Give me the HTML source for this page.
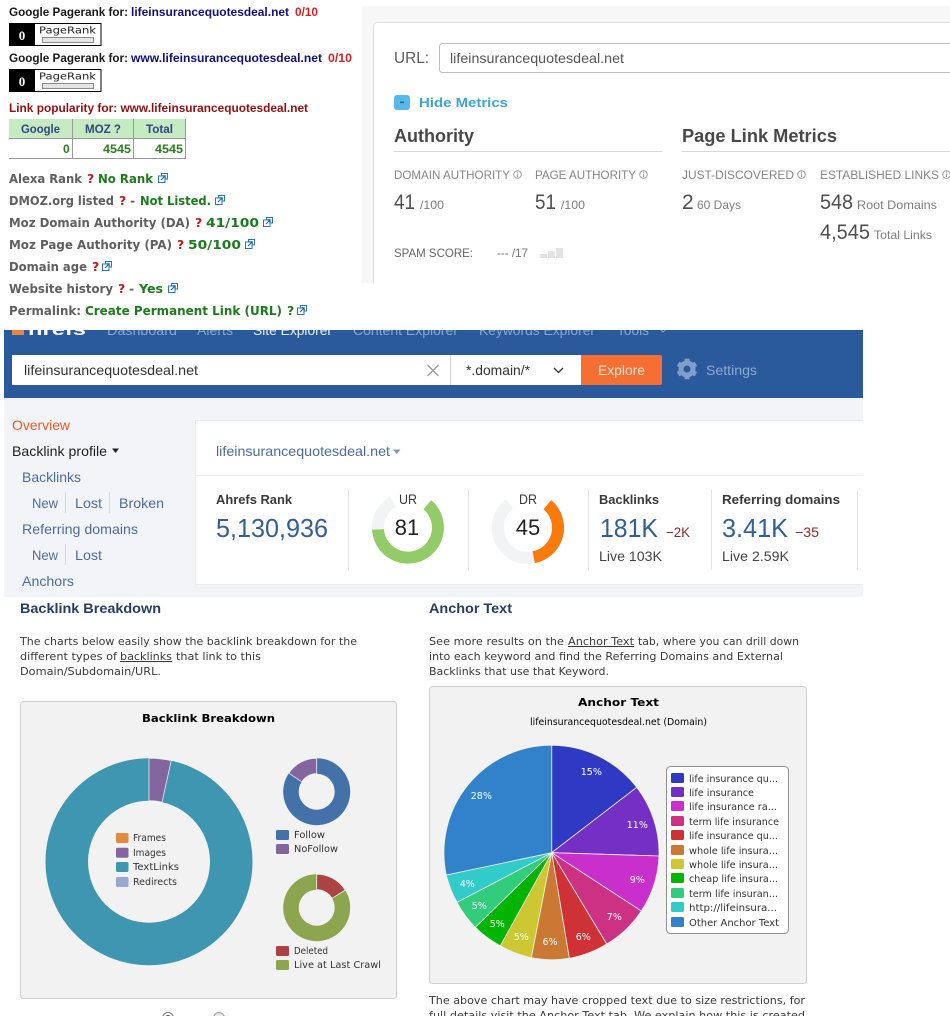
<!DOCTYPE html>
<html lang="en"><head><meta charset="utf-8"><title>Metrics</title>
<style>
html,body{margin:0;padding:0;background:#fff;width:950px;height:1016px;overflow:hidden}
svg{display:block}
text{font-family:"Liberation Sans",Arial,sans-serif;white-space:pre}
.b{font-weight:700}
.v{font-family:"DejaVu Sans",Verdana,sans-serif}
.r{font-family:"DejaVu Sans",Verdana,sans-serif;font-weight:700;font-size:12.5px}
.g{fill:#5f5f5f}.gr{fill:#1d7a1d}.q{fill:#b02020}
.p{font-family:"DejaVu Sans",Verdana,sans-serif;font-size:10.5px;fill:#3a3a3a}
.l{font-family:"DejaVu Sans",Verdana,sans-serif;font-size:9.5px;fill:#333}
.n{font-size:14px;fill:#4c6c9f}
.pl{font-family:"DejaVu Sans",Verdana,sans-serif;font-size:9.5px;fill:#fff;text-anchor:middle}
</style></head><body>
<svg xmlns="http://www.w3.org/2000/svg" width="950" height="1016" viewBox="0 0 950 1016">
<defs>
<clipPath id="navclip"><rect x="0" y="330" width="950" height="20"/></clipPath>
<symbol id="ext" viewBox="0 0 10 10" overflow="visible">
<rect x="3.5" y=".5" width="6" height="5.5" fill="#fff" stroke="#2b74b5" stroke-width="1"/>
<rect x=".5" y="3" width="6.5" height="6.5" fill="#fff" stroke="#2b74b5" stroke-width="1"/>
<path d="M3 7L7 3M4.5 2.8H7.2V5.5" fill="none" stroke="#1c5f9e" stroke-width="1"/>
</symbol>
<symbol id="info" viewBox="0 0 9 9" overflow="visible">
<circle cx="4.5" cy="4.5" r="3.8" fill="none" stroke="#999" stroke-width="1"/>
<path d="M4.5 3.6V7M4.5 1.8V2.8" stroke="#999" stroke-width="1"/>
</symbol>
<symbol id="pr" viewBox="0 0 92 23" overflow="visible">
<rect x=".5" y=".5" width="91.5" height="22" fill="#fff" stroke="#000"/>
<rect x="0" y="0" width="26" height="23" fill="#000"/>
<text x="13" y="17" text-anchor="middle" fill="#fff" style="font-family:'Liberation Serif',serif;font-weight:700;font-size:13px">0</text>
<text x="30" y="10.5" textLength="57" lengthAdjust="spacingAndGlyphs" fill="#222" style="font-family:'DejaVu Sans',sans-serif;font-size:10px">PageRank</text>
<rect x="33.5" y="14.5" width="51" height="5" fill="#e4e4e4" stroke="#8a8a8a"/>
</symbol>
</defs>

<!-- top left -->
<g style="font-size:12px" class="b">
<text x="9" y="16" fill="#1a1a1a" textLength="119" lengthAdjust="spacingAndGlyphs">Google Pagerank for:</text>
<text x="131" y="16" fill="#10107a" textLength="158" lengthAdjust="spacingAndGlyphs">lifeinsurancequotesdeal.net</text>
<text x="295" y="16" fill="#d02424" textLength="23" lengthAdjust="spacingAndGlyphs">0/10</text>
<text x="9" y="62" fill="#1a1a1a" textLength="119" lengthAdjust="spacingAndGlyphs">Google Pagerank for:</text>
<text x="131" y="62" fill="#10107a" textLength="191" lengthAdjust="spacingAndGlyphs">www.lifeinsurancequotesdeal.net</text>
<text x="328" y="62" fill="#d02424" textLength="24" lengthAdjust="spacingAndGlyphs">0/10</text>
<text x="9" y="112" fill="#8f1010" textLength="299" lengthAdjust="spacingAndGlyphs">Link popularity for: www.lifeinsurancequotesdeal.net</text>
</g>
<use href="#pr" x="9" y="23" width="92" height="23"/>
<use href="#pr" x="9" y="69" width="92" height="23"/>

<!-- table -->
<rect x="9" y="119" width="177" height="19" fill="#c6eac2"/>
<path d="M9 158.5H186M9 138.5H186M72.5 119V158M133.5 119V158M185.5 119V158" stroke="#9a9a9a" fill="none"/>
<g class="b" style="font-size:12px" fill="#34447f">
<text x="21" y="133" textLength="39" lengthAdjust="spacingAndGlyphs">Google</text>
<text x="85" y="133" textLength="36" lengthAdjust="spacingAndGlyphs">MOZ ?</text>
<text x="146" y="133" textLength="27" lengthAdjust="spacingAndGlyphs">Total</text>
</g>
<g class="b" style="font-size:12px" fill="#2c7d1c">
<text x="63" y="153">0</text>
<text x="103" y="153" textLength="28" lengthAdjust="spacingAndGlyphs">4545</text>
<text x="155" y="153" textLength="28" lengthAdjust="spacingAndGlyphs">4545</text>
</g>

<!-- rows -->
<text class="r g" x="9" y="183" textLength="73" lengthAdjust="spacingAndGlyphs">Alexa Rank</text>
<text class="r q" x="87" y="183">?</text>
<text class="r gr" x="98" y="183" textLength="55" lengthAdjust="spacingAndGlyphs">No Rank</text>
<use href="#ext" x="158" y="173" width="10" height="10"/>

<text class="r g" x="9" y="205" textLength="105" lengthAdjust="spacingAndGlyphs">DMOZ.org listed</text>
<text class="r q" x="119" y="205">?</text>
<text class="r g" x="130" y="205">-</text>
<text class="r gr" x="140" y="205" textLength="71" lengthAdjust="spacingAndGlyphs">Not Listed.</text>
<use href="#ext" x="215" y="195" width="10" height="10"/>

<text class="r g" x="9" y="227" textLength="181" lengthAdjust="spacingAndGlyphs">Moz Domain Authority (DA)</text>
<text class="r q" x="195" y="227">?</text>
<text class="r gr" x="206" y="227" textLength="53" lengthAdjust="spacingAndGlyphs">41/100</text>
<use href="#ext" x="263" y="217" width="10" height="10"/>

<text class="r g" x="9" y="249" textLength="163" lengthAdjust="spacingAndGlyphs">Moz Page Authority (PA)</text>
<text class="r q" x="177" y="249">?</text>
<text class="r gr" x="188" y="249" textLength="53" lengthAdjust="spacingAndGlyphs">50/100</text>
<use href="#ext" x="245" y="239" width="10" height="10"/>

<text class="r g" x="9" y="271" textLength="78" lengthAdjust="spacingAndGlyphs">Domain age</text>
<text class="r q" x="92" y="271">?</text>
<use href="#ext" x="102" y="261" width="10" height="10"/>

<text class="r g" x="9" y="293" textLength="104" lengthAdjust="spacingAndGlyphs">Website history</text>
<text class="r q" x="118" y="293">?</text>
<text class="r g" x="129" y="293">-</text>
<text class="r gr" x="139" y="293" textLength="24" lengthAdjust="spacingAndGlyphs">Yes</text>
<use href="#ext" x="168" y="283" width="10" height="10"/>

<text class="r g" x="9" y="315" textLength="72" lengthAdjust="spacingAndGlyphs">Permalink:</text>
<text class="r gr" x="85" y="315" textLength="197" lengthAdjust="spacingAndGlyphs">Create Permanent Link (URL)</text>
<text class="r gr" x="287" y="315">?</text>
<use href="#ext" x="297" y="305" width="10" height="10"/>

<!-- Moz panel -->
<rect x="362" y="6" width="588" height="277" fill="#f7f7f7"/>
<path d="M373.5 283V26.5a4 4 0 0 1 4-4H950V283Z" fill="#fff"/>
<path d="M373.5 283V26.5a4 4 0 0 1 4-4H950" fill="none" stroke="#dedede"/>
<text x="394" y="63" fill="#5a5a5a" textLength="35" lengthAdjust="spacingAndGlyphs" style="font-size:16px">URL:</text>
<path d="M950 43.5H442.5a3 3 0 0 0-3 3v23a3 3 0 0 0 3 3H950" fill="#fff" stroke="#bdbdbd"/>
<text x="450" y="63" fill="#555" textLength="174" lengthAdjust="spacingAndGlyphs" style="font-size:14px">lifeinsurancequotesdeal.net</text>
<rect x="394" y="95" width="16" height="15" rx="3" fill="#56b9ec"/>
<rect x="400" y="101.5" width="4" height="1.6" fill="#1f6d96"/>
<text class="b" x="419" y="107" fill="#3fa5cc" textLength="89" lengthAdjust="spacingAndGlyphs" style="font-size:13px">Hide Metrics</text>
<text class="b" x="394" y="142" fill="#484848" textLength="80" lengthAdjust="spacingAndGlyphs" style="font-size:18px">Authority</text>
<text class="b" x="682" y="142" fill="#484848" textLength="155" lengthAdjust="spacingAndGlyphs" style="font-size:18px">Page Link Metrics</text>
<path d="M394 151.5H662M682 151.5H950" stroke="#d8d8d8"/>
<g fill="#858585" style="font-size:12px">
<text x="394" y="179" textLength="116" lengthAdjust="spacingAndGlyphs">DOMAIN AUTHORITY</text>
<text x="535" y="179" textLength="101" lengthAdjust="spacingAndGlyphs">PAGE AUTHORITY</text>
<text x="682" y="179" textLength="112" lengthAdjust="spacingAndGlyphs">JUST-DISCOVERED</text>
<text x="820" y="179" textLength="119" lengthAdjust="spacingAndGlyphs">ESTABLISHED LINKS</text>
</g>
<use href="#info" x="513" y="170" width="9" height="9"/>
<use href="#info" x="639" y="170" width="9" height="9"/>
<use href="#info" x="797" y="170" width="9" height="9"/>
<use href="#info" x="942" y="170" width="9" height="9"/>
<g fill="#4f4f4f" style="font-size:21px">
<text x="394" y="209" textLength="21" lengthAdjust="spacingAndGlyphs">41</text>
<text x="535" y="209" textLength="21" lengthAdjust="spacingAndGlyphs">51</text>
<text x="682" y="209">2</text>
<text x="820" y="209" textLength="33" lengthAdjust="spacingAndGlyphs">548</text>
<text x="820" y="239" textLength="50" lengthAdjust="spacingAndGlyphs">4,545</text>
</g>
<g fill="#7c7c7c" style="font-size:12px">
<text x="420" y="209" textLength="24" lengthAdjust="spacingAndGlyphs">/100</text>
<text x="561" y="209" textLength="24" lengthAdjust="spacingAndGlyphs">/100</text>
<text x="697" y="209" textLength="44" lengthAdjust="spacingAndGlyphs">60 Days</text>
<text x="857" y="209" textLength="80" lengthAdjust="spacingAndGlyphs">Root Domains</text>
<text x="874" y="239" textLength="58" lengthAdjust="spacingAndGlyphs">Total Links</text>
</g>
<text x="394" y="257" fill="#666" textLength="79" lengthAdjust="spacingAndGlyphs" style="font-size:12px">SPAM SCORE:</text>
<text x="497" y="257" fill="#777" textLength="31" lengthAdjust="spacingAndGlyphs" style="font-size:12px">--- /17</text>
<rect x="540" y="254" width="7" height="4" fill="#e3e3e3"/>
<rect x="548" y="251" width="7" height="7" fill="#e3e3e3"/>
<rect x="556" y="248" width="7" height="10" fill="#e3e3e3"/>

<!-- Ahrefs -->
<rect x="4" y="398" width="859" height="199" fill="#f3f4f7"/>
<rect x="4" y="330" width="859" height="68" fill="#2b5a9c"/>
<g clip-path="url(#navclip)">
<rect x="12" y="322" width="12" height="13" fill="#e8873e"/>
<text class="b" x="28" y="335" fill="#fff" textLength="58" lengthAdjust="spacingAndGlyphs" style="font-size:17px">hrefs</text>
<g fill="#8aa5cf" style="font-size:14px">
<text x="107" y="335" textLength="70" lengthAdjust="spacingAndGlyphs">Dashboard</text>
<text x="197" y="335" textLength="36" lengthAdjust="spacingAndGlyphs">Alerts</text>
<text x="253" y="335" textLength="79" lengthAdjust="spacingAndGlyphs" fill="#e8eef7">Site Explorer</text>
<text x="353" y="335" textLength="105" lengthAdjust="spacingAndGlyphs">Content Explorer</text>
<text x="479" y="335" textLength="116" lengthAdjust="spacingAndGlyphs">Keywords Explorer</text>
<text x="617" y="335" textLength="32" lengthAdjust="spacingAndGlyphs">Tools</text>
</g>
<path d="M660 329l3 3 3-3" fill="none" stroke="#8aa5cf"/>
</g>
<rect x="12" y="355" width="569" height="30" fill="#fff"/>
<path d="M581 355h79a2 2 0 0 1 2 2v26a2 2 0 0 1-2 2h-79Z" fill="#f56f33"/>
<text x="24" y="375" fill="#333" textLength="174" lengthAdjust="spacingAndGlyphs" style="font-size:14px">lifeinsurancequotesdeal.net</text>
<path d="M427.5 365l11 11M438.5 365l-11 11" stroke="#9a9a9a" stroke-width="1.3"/>
<path d="M450.5 355V385" stroke="#d4d4d4"/>
<text x="466" y="375" fill="#333" textLength="64" lengthAdjust="spacingAndGlyphs" style="font-size:14px">*.domain/*</text>
<path d="M554 368l4.500 4.500 4.500-4.500" fill="none" stroke="#333" stroke-width="1.3"/>
<text x="598" y="375" fill="#fbe3d6" textLength="47" lengthAdjust="spacingAndGlyphs" style="font-size:14px">Explore</text>
<g transform="translate(687 369)" fill="#7f9fcd">
<circle r="6" fill="none" stroke="#7f9fcd" stroke-width="5"/>
<rect x="-2.500" y="-10.300" width="5" height="4"/>
<rect x="-2.500" y="-10.300" width="5" height="4" transform="rotate(60)"/>
<rect x="-2.500" y="-10.300" width="5" height="4" transform="rotate(120)"/>
<rect x="-2.500" y="-10.300" width="5" height="4" transform="rotate(180)"/>
<rect x="-2.500" y="-10.300" width="5" height="4" transform="rotate(240)"/>
<rect x="-2.500" y="-10.300" width="5" height="4" transform="rotate(300)"/>
</g>
<text x="706" y="375" fill="#8ea8cf" textLength="51" lengthAdjust="spacingAndGlyphs" style="font-size:14px">Settings</text>

<text x="12" y="430" fill="#e8592c" textLength="58" lengthAdjust="spacingAndGlyphs" style="font-size:14px">Overview</text>
<text x="12" y="456" fill="#222" textLength="95" lengthAdjust="spacingAndGlyphs" style="font-size:14px">Backlink profile</text>
<path d="M112 448.500h7l-3.500 4.500Z" fill="#222"/>
<text class="n" x="22" y="482" textLength="59" lengthAdjust="spacingAndGlyphs">Backlinks</text>
<text class="n" x="32" y="508" textLength="26" lengthAdjust="spacingAndGlyphs">New</text>
<text class="n" x="75" y="508" textLength="27" lengthAdjust="spacingAndGlyphs">Lost</text>
<text class="n" x="119" y="508" textLength="45" lengthAdjust="spacingAndGlyphs">Broken</text>
<text class="n" x="22" y="534" textLength="116" lengthAdjust="spacingAndGlyphs">Referring domains</text>
<text class="n" x="32" y="560" textLength="26" lengthAdjust="spacingAndGlyphs">New</text>
<text class="n" x="75" y="560" textLength="27" lengthAdjust="spacingAndGlyphs">Lost</text>
<text class="n" x="22" y="586" textLength="52" lengthAdjust="spacingAndGlyphs">Anchors</text>
<path d="M65.500 492V513M109.500 492V513M65.500 544V565" stroke="#d3d6de"/>

<path d="M863 420.500H195.500V584.500H863" fill="#fff" stroke="#e9eaec"/>
<path d="M196 475.500H863" stroke="#eceded"/>
<text x="216" y="456" fill="#4c6c9f" textLength="174" lengthAdjust="spacingAndGlyphs" style="font-size:14px">lifeinsurancequotesdeal.net</text>
<path d="M393 449.500h7.500l-3.750 4.500Z" fill="#7d94ba"/>
<path d="M348.500 490V570M468.500 490V570M588.500 490V570M711.500 490V570M857.500 490V570" stroke="#e2e3e5"/>
<g class="b" fill="#3a3a3a" style="font-size:13px">
<text x="216" y="504" textLength="76" lengthAdjust="spacingAndGlyphs">Ahrefs Rank</text>
<text x="399" y="504" textLength="18" lengthAdjust="spacingAndGlyphs" style="font-weight:400;font-size:14px">UR</text>
<text x="519" y="504" textLength="18" lengthAdjust="spacingAndGlyphs" style="font-weight:400;font-size:14px">DR</text>
<text x="599" y="504" textLength="60" lengthAdjust="spacingAndGlyphs">Backlinks</text>
<text x="722" y="504" textLength="118" lengthAdjust="spacingAndGlyphs">Referring domains</text>
</g>
<g fill="#345e97" style="font-size:26px">
<text x="216" y="537" textLength="112" lengthAdjust="spacingAndGlyphs">5,130,936</text>
<text x="600" y="537" textLength="58" lengthAdjust="spacingAndGlyphs">181K</text>
<text x="722" y="537" textLength="66" lengthAdjust="spacingAndGlyphs">3.41K</text>
</g>
<path d="M427.300 504.700A30 30 0 1 1 378 529.300" fill="none" stroke="#93cb69" stroke-width="12"/>
<path d="M378 529.300A30 30 0 0 1 393 501.700" fill="none" stroke="#f1f3f5" stroke-width="12"/>
<path d="M533.700 557.200A30 30 0 0 1 509.500 504" fill="none" stroke="#f1f3f5" stroke-width="12"/>
<path d="M547.300 504.700A30 30 0 0 1 533.700 557.200" fill="none" stroke="#fb7a0d" stroke-width="12"/>
<text x="407" y="535" text-anchor="middle" fill="#222" style="font-size:22px">81</text>
<text x="528" y="535" text-anchor="middle" fill="#222" style="font-size:22px">45</text>
<g fill="#8d2a2a" style="font-size:14px">
<text x="666" y="537" textLength="24" lengthAdjust="spacingAndGlyphs">−2K</text>
<text x="795" y="537" textLength="24" lengthAdjust="spacingAndGlyphs">−35</text>
</g>
<g fill="#444" style="font-size:14px">
<text x="599" y="561" textLength="63" lengthAdjust="spacingAndGlyphs">Live 103K</text>
<text x="722" y="561" textLength="67" lengthAdjust="spacingAndGlyphs">Live 2.59K</text>
</g>

<!-- lower left -->
<text class="b" x="20" y="613" fill="#24405e" textLength="141" lengthAdjust="spacingAndGlyphs" style="font-size:14px">Backlink Breakdown</text>
<text class="p" x="20" y="645" textLength="337" lengthAdjust="spacingAndGlyphs">The charts below easily show the backlink breakdown for the</text>
<text class="p" x="20" y="660" textLength="97" lengthAdjust="spacingAndGlyphs">different types of</text>
<text class="p" x="120" y="660" textLength="52" lengthAdjust="spacingAndGlyphs" text-decoration="underline">backlinks</text>
<text class="p" x="176" y="660" textLength="85" lengthAdjust="spacingAndGlyphs">that link to this</text>
<text class="p" x="20" y="675" textLength="141" lengthAdjust="spacingAndGlyphs">Domain/Subdomain/URL.</text>

<rect x="20.500" y="701.500" width="376" height="297" rx="3" fill="#f2f2f2" stroke="#cfcfcf"/>
<text class="v b" x="142" y="722" fill="#000" textLength="133" lengthAdjust="spacingAndGlyphs" style="font-size:11px">Backlink Breakdown</text>
<circle cx="149" cy="861.700" r="103.500" fill="#3f96b0"/>
<path d="M149 758.200A103.500 103.500 0 0 1 171.200 760.600L162.100 802.100A61 61 0 0 0 149 800.700Z" fill="#84669f" stroke="#e6eef2" stroke-width=".8"/>
<circle cx="149" cy="861.700" r="61" fill="#f2f2f2"/>
<circle cx="316.700" cy="791.700" r="33.500" fill="#4472a8"/>
<path d="M316.700 758.200A33.500 33.500 0 0 0 288.800 773.200L301.700 781.800A18 18 0 0 1 316.700 773.700Z" fill="#84669f" stroke="#eef" stroke-width=".8"/>
<circle cx="316.700" cy="791.700" r="18" fill="#f2f2f2"/>
<circle cx="316.700" cy="907.700" r="33.500" fill="#8ba64f"/>
<path d="M316.700 874.200A33.500 33.500 0 0 1 345.200 890.100L332 898.300A18 18 0 0 0 316.700 889.700Z" fill="#ab4343" stroke="#f4f4ee" stroke-width=".8"/>
<circle cx="316.700" cy="907.700" r="18" fill="#f2f2f2"/>
<rect x="116" y="833" width="12.500" height="10" rx="1.500" fill="#e08b3f"/>
<rect x="116" y="847.700" width="12.500" height="10" rx="1.500" fill="#84669f"/>
<rect x="116" y="862" width="12.500" height="10" rx="1.500" fill="#3f96b0"/>
<rect x="116" y="877" width="12.500" height="10" rx="1.500" fill="#96a9d0"/>
<rect x="276" y="830" width="13" height="10" rx="1.500" fill="#4472a8"/>
<rect x="276" y="844" width="13" height="10" rx="1.500" fill="#84669f"/>
<rect x="276" y="946" width="13" height="10" rx="1.500" fill="#ab4343"/>
<rect x="276" y="960" width="13" height="10" rx="1.500" fill="#8ba64f"/>
<text class="l" x="133" y="841" textLength="33" lengthAdjust="spacingAndGlyphs">Frames</text>
<text class="l" x="133" y="856" textLength="33" lengthAdjust="spacingAndGlyphs">Images</text>
<text class="l" x="133" y="870" textLength="46" lengthAdjust="spacingAndGlyphs">TextLinks</text>
<text class="l" x="133" y="885" textLength="44" lengthAdjust="spacingAndGlyphs">Redirects</text>
<text class="l" x="294" y="838" textLength="31" lengthAdjust="spacingAndGlyphs">Follow</text>
<text class="l" x="294" y="852" textLength="44" lengthAdjust="spacingAndGlyphs">NoFollow</text>
<text class="l" x="294" y="954" textLength="34" lengthAdjust="spacingAndGlyphs">Deleted</text>
<text class="l" x="294" y="968" textLength="87" lengthAdjust="spacingAndGlyphs">Live at Last Crawl</text>
<circle cx="168" cy="1018" r="5.500" fill="#fff" stroke="#777"/><circle cx="168" cy="1018" r="3" fill="#444"/>
<circle cx="219" cy="1018" r="5.500" fill="#e8e8e8" stroke="#999"/>

<!-- lower right -->
<text class="b" x="429" y="613" fill="#24405e" textLength="83" lengthAdjust="spacingAndGlyphs" style="font-size:14px">Anchor Text</text>
<text class="p" x="429" y="645" textLength="135" lengthAdjust="spacingAndGlyphs">See more results on the</text>
<text class="p" x="568" y="645" textLength="66" lengthAdjust="spacingAndGlyphs" text-decoration="underline">Anchor Text</text>
<text class="p" x="638" y="645" textLength="161" lengthAdjust="spacingAndGlyphs">tab, where you can drill down</text>
<text class="p" x="429" y="660" textLength="354" lengthAdjust="spacingAndGlyphs">into each keyword and find the Referring Domains and External</text>
<text class="p" x="429" y="675" textLength="180" lengthAdjust="spacingAndGlyphs">Backlinks that use that Keyword.</text>

<rect x="429.500" y="686.500" width="377" height="297" rx="3" fill="#f2f2f2" stroke="#cfcfcf"/>
<text class="v b" x="578" y="706" fill="#000" textLength="81" lengthAdjust="spacingAndGlyphs" style="font-size:11px">Anchor Text</text>
<text class="v" x="530" y="725" fill="#000" textLength="177" lengthAdjust="spacingAndGlyphs" style="font-size:9.500px">lifeinsurancequotesdeal.net (Domain)</text>
<g stroke="#f0f0e8" stroke-width=".8">
<path d="M551.700 852.700L551.700 745.200A107.500 107.500 0 0 1 636.700 787.300Z" fill="#2f39c4"/>
<path d="M551.700 852.700L636.700 787.300A107.500 107.500 0 0 1 659 856Z" fill="#7430c4"/>
<path d="M551.700 852.700L659 856A107.500 107.500 0 0 1 641.300 911Z" fill="#c92fcb"/>
<path d="M551.700 852.700L641.300 911A107.500 107.500 0 0 1 606.700 944Z" fill="#cc3183"/>
<path d="M551.700 852.700L606.700 944A107.500 107.500 0 0 1 569.300 958.300Z" fill="#ce3237"/>
<path d="M551.700 852.700L569.300 958.300A107.500 107.500 0 0 1 531.300 957.700Z" fill="#c97933"/>
<path d="M551.700 852.700L531.300 957.700A107.500 107.500 0 0 1 500.300 945.700Z" fill="#cdc731"/>
<path d="M551.700 852.700L500.300 945.700A107.500 107.500 0 0 1 475.300 927.300Z" fill="#00b400"/>
<path d="M551.700 852.700L475.300 927.300A107.500 107.500 0 0 1 457 902.300Z" fill="#32cc7d"/>
<path d="M551.700 852.700L457 902.300A107.500 107.500 0 0 1 446.300 875Z" fill="#31cbc9"/>
<path d="M551.700 852.700L446.300 875A107.500 107.500 0 0 1 551.700 745.200Z" fill="#3282cb"/>
</g>
<text class="pl" x="591.300" y="775">15%</text>
<text class="pl" x="637.300" y="828">11%</text>
<text class="pl" x="637.300" y="883">9%</text>
<text class="pl" x="614.300" y="920">7%</text>
<text class="pl" x="583.300" y="940">6%</text>
<text class="pl" x="550" y="945">6%</text>
<text class="pl" x="521.300" y="940">5%</text>
<text class="pl" x="497.300" y="927">5%</text>
<text class="pl" x="479.300" y="909">5%</text>
<text class="pl" x="467.300" y="887">4%</text>
<text class="pl" x="481.300" y="799">28%</text>

<rect x="666.500" y="766.500" width="122" height="167" rx="4" fill="#fff" stroke="#8f8f8f"/>
<g>
<rect x="671" y="773" width="13" height="10" rx="1.500" fill="#2f39c4"/>
<rect x="671" y="787" width="13" height="10" rx="1.500" fill="#7430c4"/>
<rect x="671" y="801" width="13" height="10" rx="1.500" fill="#c92fcb"/>
<rect x="671" y="816" width="13" height="10" rx="1.500" fill="#cc3183"/>
<rect x="671" y="830" width="13" height="10" rx="1.500" fill="#ce3237"/>
<rect x="671" y="845" width="13" height="10" rx="1.500" fill="#c97933"/>
<rect x="671" y="859" width="13" height="10" rx="1.500" fill="#cdc731"/>
<rect x="671" y="873" width="13" height="10" rx="1.500" fill="#00b400"/>
<rect x="671" y="888" width="13" height="10" rx="1.500" fill="#32cc7d"/>
<rect x="671" y="902" width="13" height="10" rx="1.500" fill="#31cbc9"/>
<rect x="671" y="917" width="13" height="10" rx="1.500" fill="#3282cb"/>
</g>
<text class="l" x="689" y="782" textLength="89" lengthAdjust="spacingAndGlyphs">life insurance qu...</text>
<text class="l" x="689" y="796" textLength="65" lengthAdjust="spacingAndGlyphs">life insurance</text>
<text class="l" x="689" y="810" textLength="88" lengthAdjust="spacingAndGlyphs">life insurance ra...</text>
<text class="l" x="689" y="825" textLength="90" lengthAdjust="spacingAndGlyphs">term life insurance</text>
<text class="l" x="689" y="839" textLength="89" lengthAdjust="spacingAndGlyphs">life insurance qu...</text>
<text class="l" x="689" y="854" textLength="89" lengthAdjust="spacingAndGlyphs">whole life insura...</text>
<text class="l" x="689" y="868" textLength="89" lengthAdjust="spacingAndGlyphs">whole life insura...</text>
<text class="l" x="689" y="882" textLength="89" lengthAdjust="spacingAndGlyphs">cheap life insura...</text>
<text class="l" x="689" y="897" textLength="89" lengthAdjust="spacingAndGlyphs">term life insuran...</text>
<text class="l" x="689" y="911" textLength="88" lengthAdjust="spacingAndGlyphs">http://lifeinsura...</text>
<text class="l" x="689" y="926" textLength="90" lengthAdjust="spacingAndGlyphs">Other Anchor Text</text>

<text class="p" x="429" y="1004" textLength="376" lengthAdjust="spacingAndGlyphs">The above chart may have cropped text due to size restrictions, for</text>
<text class="p" x="429" y="1019" textLength="376" lengthAdjust="spacingAndGlyphs">full details visit the Anchor Text tab. We explain how this is created</text>
</svg>
</body></html>
